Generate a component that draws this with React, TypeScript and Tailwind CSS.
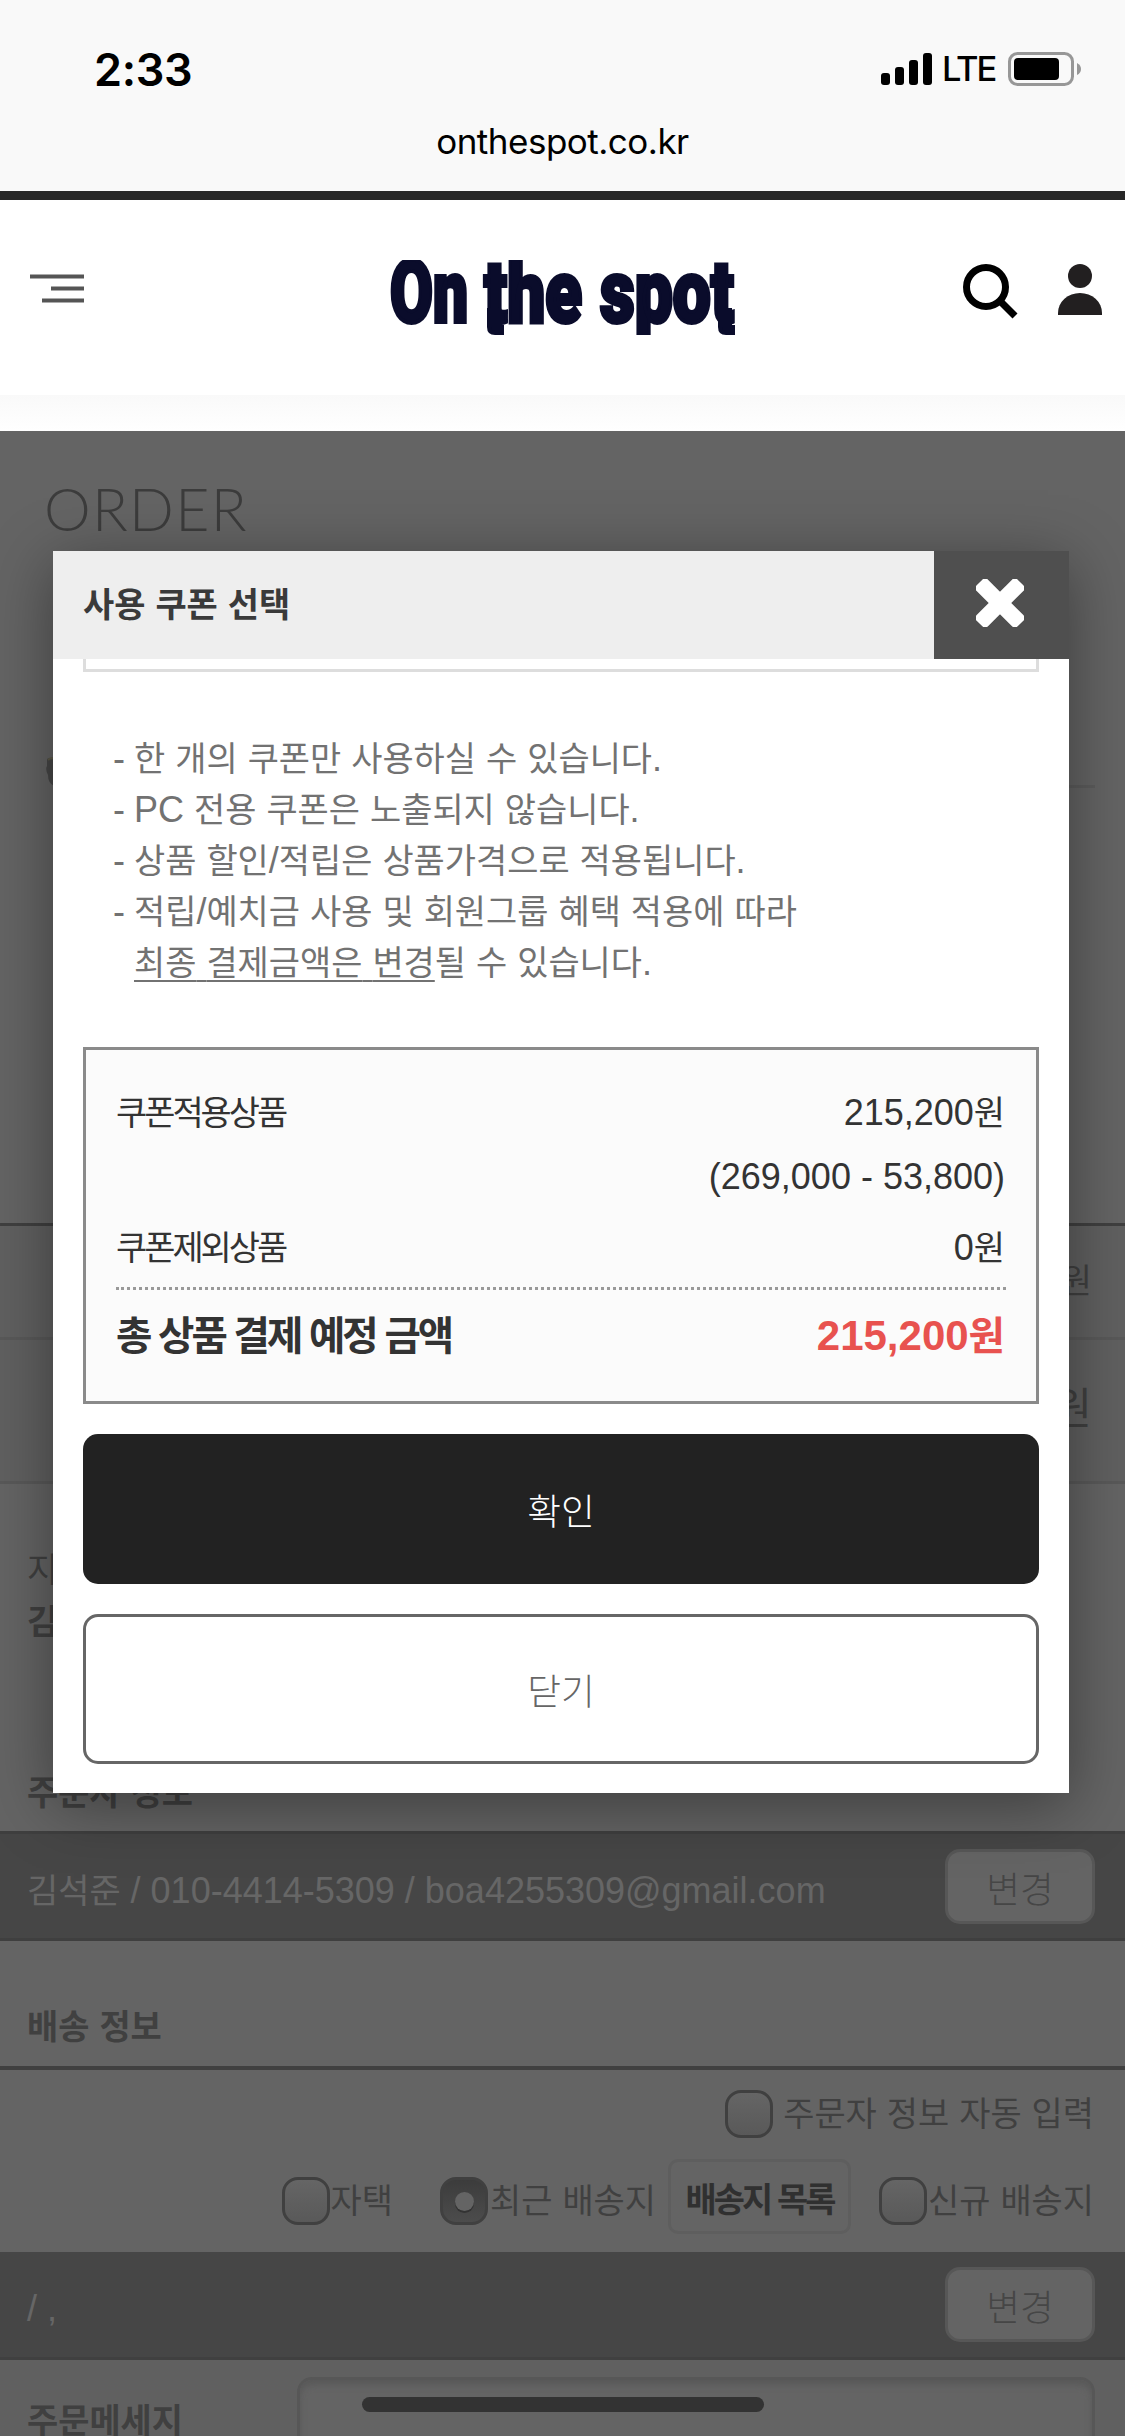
import React from "react";

const BOX = "w-12 h-12 shrink-0 rounded-[16px] border-[3px] border-[#404040] bg-linear-to-b from-[#656565] to-[#595959]";

// Hangul runs slightly smaller than the latin text around it
const Ko: React.FC<{ children: string }> = ({ children }) => (
  <>
    {children.split(/([\uac00-\ud7a3]+)/).map((part, i) =>
      i % 2 ? (
        <span key={i} className="text-[0.942em]">
          {part}
        </span>
      ) : (
        part
      )
    )}
  </>
);

const StatusBar = () => (
  <div className="h-[191px] bg-[#f9f9f9] text-black font-['Inter',sans-serif]">
    <div className="h-[118px] flex items-center justify-between pl-[94px] pr-[43px] pt-[20px]">
      <span className="text-[45px] leading-none font-semibold tracking-[-0.3px]">2:33</span>
      <div className="flex items-center">
        <svg width="51" height="32" viewBox="0 0 51 32">
          <rect x="0" y="20" width="9" height="12" rx="3" />
          <rect x="14" y="14" width="9" height="18" rx="3" />
          <rect x="28" y="7" width="9" height="25" rx="3" />
          <rect x="42" y="0" width="9" height="32" rx="3" />
        </svg>
        <span className="ml-[10px] w-[55px] text-[34.5px] leading-none font-medium tracking-[-2.2px]">LTE</span>
        <svg className="ml-[11px]" width="74" height="34" viewBox="0 0 74 34">
          <rect x="1.5" y="1.5" width="63" height="31" rx="8" fill="none" stroke="#979797" strokeWidth="3" />
          <rect x="6" y="6" width="45" height="22" rx="4" />
          <path d="M69 11 Q73 13 73 17 Q73 21 69 23Z" fill="#979797" />
        </svg>
      </div>
    </div>
    <div className="text-center text-[35px] leading-[46px] tracking-[-0.5px]">onthespot.co.kr</div>
  </div>
);

const Logo = () => (
  <svg
    className="ml-[306px]"
    width="345"
    height="75"
    viewBox="0 0 345 75"
    fill="#0a0c2b"
    stroke="#0a0c2b"
    strokeWidth="4"
    fontFamily="'Roboto', sans-serif"
    fontWeight="900"
    fontSize="87"
  >
    <text x="0" y="62" textLength="78" lengthAdjust="spacingAndGlyphs">On</text>
    <text x="94" y="62" textLength="98" lengthAdjust="spacingAndGlyphs">the</text>
    <text x="210" y="62" textLength="134" lengthAdjust="spacingAndGlyphs">spot</text>
    {/* hooks under both t's */}
    <path d="M99 50 V67 Q99 73 105 73 H112 V67 H109 V50Z" />
    <path d="M330 50 V67 Q330 73 336 73 H343 V67 H340 V50Z" />
  </svg>
);

const SiteHeader = () => (
  <header className="bg-white">
    <div className="h-[204px] border-t-[9px] border-[#272727] flex items-start pl-[30px] pt-[60px]">
      <svg className="mt-[14px]" width="54" height="30" viewBox="0 0 54 30">
        <g fill="#aaa">
          <rect x="0" y="0" width="54" height="5" />
          <rect x="21" y="12" width="33" height="5" />
          <rect x="12" y="24" width="42" height="5" />
        </g>
        <g fill="#555">
          <rect x="0" y="1" width="54" height="3" />
          <rect x="21" y="13" width="33" height="3" />
          <rect x="12" y="25" width="42" height="3" />
        </g>
      </svg>
      <Logo />
      <svg className="ml-[228px] mt-[4px]" width="56" height="56" viewBox="0 0 56 56" fill="none" stroke="#000">
        <circle cx="23" cy="23" r="19.5" strokeWidth="7" />
        <path d="M37 37 L52 52" strokeWidth="7" />
      </svg>
      <svg className="ml-[39px] mt-[4px]" width="44" height="52" viewBox="0 0 44 52" fill="#221f20">
        <circle cx="22" cy="12" r="12" />
        <path d="M0 51 V49 A22 20 0 0 1 44 49 V51Z" />
      </svg>
    </div>
    <div className="h-[36px] bg-linear-to-b from-[#f9f9f9] to-white" />
  </header>
);

const ChangeButton = () => (
  <button className="w-[150px] h-[75px] pt-[7px] rounded-[15px] border-[3px] border-[#575757] bg-[#646464] text-[39px] leading-none font-light text-[#464646]">
    <Ko>변경</Ko>
  </button>
);

// Page behind the popup, colours already include the dim layer
const OrderPage = () => (
  <main className="h-[2005px] bg-[#646464] text-[#404040] text-[36px]">
    <h1 className="h-[326px] pl-[44px] pt-[48px] font-['Lato',sans-serif] font-light text-[59px] leading-[60px] tracking-[1.3px] text-[#3c3c3c]">
      ORDER
    </h1>
    <div className="h-[31px] ml-[46px] mr-[30px] flex items-end">
      {/* product thumbnail, mostly hidden by the popup */}
      <svg width="20" height="31" viewBox="0 0 20 31">
        <path d="M1 2 Q4 0 8 1 H20 V29 H8 Q2 26 2 18 Q-1 12 1 9Z" fill="#474747" />
        <path d="M2 3 Q5 0 9 2" fill="none" stroke="#5d5a48" strokeWidth="2" />
      </svg>
      <div className="h-[3px] flex-1 bg-[#5c5c5c]" />
    </div>
    <div className="h-[435px]" />

    <div className="bg-[#606060] border-t-[3px] border-[#404040]">
      <div className="h-[114px] flex justify-end items-center pr-[33px] pb-[1px] border-b-[3px] border-[#595959]">
        <Ko>0원</Ko>
      </div>
      <div className="h-[144px] flex justify-end items-center pr-[33px] pb-[2px] text-[46px] border-b-[3px] border-[#595959]">
        <Ko>0원</Ko>
      </div>
    </div>

    <div className="h-[347px] pl-[27px] pt-[60px] leading-[51px]">
      <div><Ko>지역</Ko></div>
      <div className="font-bold"><Ko>김석준</Ko></div>
      <div className="pt-[119px] font-bold"><Ko>주문자 정보</Ko></div>
    </div>

    <div className="h-[110px] pl-[27px] pr-[30px] flex items-center justify-between bg-[#464646] border-y-[3px] border-[#3f3f3f] text-[#666]">
      <span className="pt-[10px]"><Ko>김석준 / 010-4414-5309 / boa4255309@gmail.com</Ko></span>
      <ChangeButton />
    </div>

    <h2 className="h-[129px] pl-[27px] pt-[60px] leading-[51px] font-bold border-b-[4px] border-[#404040]">
      <Ko>배송 정보</Ko>
    </h2>

    <div className="h-[182px] pr-[31px] pt-[20px]">
      <div className="h-12 flex items-center justify-end gap-[10px]">
        <span className={BOX} />
        <span><Ko>주문자 정보 자동 입력</Ko></span>
      </div>
      <div className="mt-[21px] h-[75px] flex items-end justify-end leading-[48px]">
        <span className={`${BOX} mb-[9px] mr-[1px]`} />
        <span className="mb-[9px]"><Ko>자택</Ko></span>
        <span className="ml-[47px] mr-[2px] mb-[9px] w-12 h-12 shrink-0 rounded-[16px] bg-linear-to-b from-[#3c3c3c] to-[#4c4c4c] border-[3px] border-[#404040] flex items-center justify-center">
          <span className="w-[19px] h-[19px] rounded-full bg-[#646464] shadow-[0_2px_0_#333]" />
        </span>
        <span className="mb-[9px]"><Ko>최근 배송지</Ko></span>
        <button className="mx-[12px] w-[183px] h-[75px] pt-[6px] rounded-[10px] border-[3px] border-[#5e5e5e] font-bold text-[#303030] tracking-[-3px] leading-none">
          <Ko>배송지 목록</Ko>
        </button>
        <span className={`${BOX} mb-[9px] ml-[16px] mr-[1px]`} />
        <span className="mb-[9px]"><Ko>신규 배송지</Ko></span>
      </div>
    </div>

    <div className="h-[108px] pl-[27px] pr-[30px] flex items-center justify-between bg-[#464646] border-b-[3px] border-[#404040] text-[#666]">
      <span className="pt-[9px]">/ ,</span>
      <ChangeButton />
    </div>

    <div className="h-[76px] overflow-hidden pl-[27px] pr-[30px] flex bg-[#606060]">
      <span className="w-[270px] pt-[35px] leading-[51px] font-bold"><Ko>주문메세지</Ko></span>
      <div className="mt-[17px] h-[120px] flex-1 rounded-[15px] border-[3px] border-[#575757] bg-[#646464] shadow-[inset_0_5px_6px_#595959]" />
    </div>
  </main>
);

const notes = [
  "한 개의 쿠폰만 사용하실 수 있습니다.",
  "PC 전용 쿠폰은 노출되지 않습니다.",
  "상품 할인/적립은 상품가격으로 적용됩니다.",
  "적립/예치금 사용 및 회원그룹 혜택 적용에 따라",
];

const CouponModal = () => (
  <section className="absolute left-[53px] top-[551px] w-[1016px] h-[1242px] bg-white text-[36px] shadow-[0_12px_60px_rgba(0,0,0,0.4)]">
    <div className="h-[108px] flex bg-[#eee]">
      <h2 className="flex-1 pl-[30px] leading-[107px] font-bold text-[#3a3a3a]"><Ko>사용 쿠폰 선택</Ko></h2>
      <button className="w-[135px] bg-[#4f4f4f] flex justify-center pt-[28px] pr-[3px]">
        <svg width="48" height="48" viewBox="0 0 48 48" fill="#fff">
          <rect x="-5" y="16" width="58" height="16" rx="4" transform="rotate(45 24 24)" />
          <rect x="-5" y="16" width="58" height="16" rx="4" transform="rotate(-45 24 24)" />
        </svg>
      </button>
    </div>

    <div className="px-[30px]">
      <div className="h-[13px] border-[3px] border-t-0 border-[#ddd]" />

      <ul className="pt-[61px] pl-[30px] text-[#727272] leading-[51px]">
        {notes.map((note) => (
          <li key={note} className="h-[51px] flex">
            <span className="w-[21px]">-</span>
            <span><Ko>{note}</Ko></span>
          </li>
        ))}
        <li className="h-[51px] pl-[21px]">
          <span className="underline decoration-2 underline-offset-[5px]"><Ko>최종 결제금액은 변경</Ko></span>
          <Ko>될 수 있습니다.</Ko>
        </li>
      </ul>

      <div className="mt-[59px] h-[357px] border-[3px] border-[#8a8a8a] bg-[#fbfbfb] px-[30px] pt-[31px] text-[#333]">
        <div className="flex justify-between leading-[64px]">
          <span className="tracking-[-3px]"><Ko>쿠폰적용상품</Ko></span>
          <span className="text-right pr-[1px]">
            <Ko>215,200원</Ko>
            <br />
            (269,000 - 53,800)
          </span>
        </div>
        <div className="h-[81px] pt-[10px] flex justify-between leading-[57px] border-b-[3px] border-dotted border-[#999]">
          <span className="tracking-[-3px]"><Ko>쿠폰제외상품</Ko></span>
          <span className="pr-[1px]"><Ko>0원</Ko></span>
        </div>
        <div className="flex justify-between leading-[92px] text-[42px] font-bold">
          <span className="tracking-[-3px]"><Ko>총 상품 결제 예정 금액</Ko></span>
          <span className="pr-[1px] text-[#e8524f]"><Ko>215,200원</Ko></span>
        </div>
      </div>

      <button className="mt-[30px] block w-full h-[150px] pt-[7px] rounded-[15px] bg-[#222] text-white text-[39px] font-light"><Ko>확인</Ko></button>
      <button className="mt-[30px] block w-full h-[150px] pt-[7px] rounded-[15px] border-[3px] border-[#666] text-[#666] text-[39px] font-light"><Ko>닫기</Ko></button>
    </div>
  </section>
);

export default function App() {
  return (
    <div className="relative w-[1125px] h-[2436px] overflow-hidden font-['Liberation_Sans','Noto_Sans_CJK_KR',sans-serif]">
      <StatusBar />
      <SiteHeader />
      <OrderPage />
      <CouponModal />
      <div className="absolute left-[362px] top-[2397px] w-[402px] h-[15px] rounded-full bg-[#333]" />
    </div>
  );
}
